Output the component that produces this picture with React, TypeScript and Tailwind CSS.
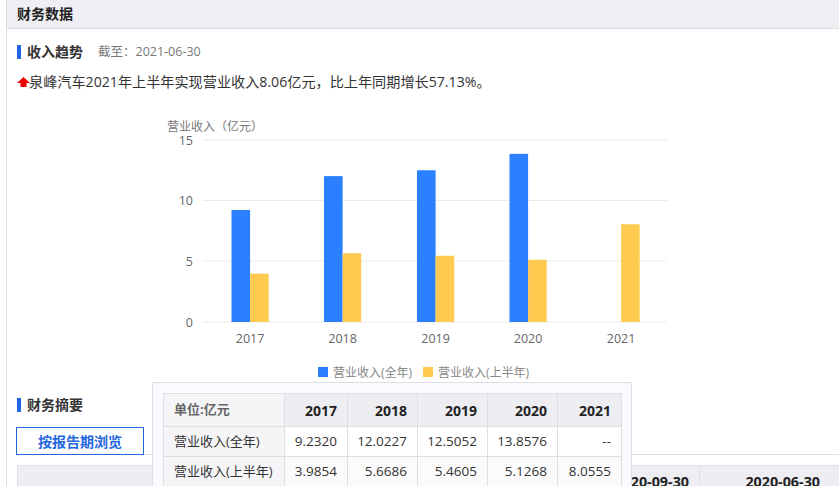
const FONT = '"Open Sans","Noto Sans CJK SC",sans-serif';

const years = ["2017", "2018", "2019", "2020", "2021"];
const blue = [9.232, 12.0227, 12.5052, 13.8576, 0];
const yellow = [3.9854, 5.6686, 5.4605, 5.1268, 8.0555];
const starts = [231.5, 324, 417, 509.5, 602.5];

function Chart() {
  const y0 = 322;
  const scale = 182 / 15;
  return (
    <svg width="530" height="275" viewBox="150 110 530 275" className="block">
      <g fontFamily={FONT} fontSize="12.5" fill="#666">
        <text x="167" y="131" fill="#777" fontSize="12">营业收入（亿元）</text>
        {[["15", 140], ["10", 200.5], ["5", 261], ["0", 322]].map(([l, y]) => (
          <g key={l as string}>
            <line x1="203" x2="667" y1={y as number} y2={y as number} stroke="#ebebeb" strokeWidth="1" />
            <text x="193" y={(y as number) + 4.5} textAnchor="end" fontSize="12.5">{l}</text>
          </g>
        ))}
        {years.map((yr, i) => (
          <g key={yr}>
            {blue[i] > 0 && (
              <rect x={starts[i]} width="18.6" y={y0 - blue[i] * scale} height={blue[i] * scale} fill="#2a80ff" />
            )}
            <rect x={starts[i] + 18.6} width="18.6" y={y0 - yellow[i] * scale} height={yellow[i] * scale} fill="#ffca50" />
            <text x={starts[i] + 18.6} y="343" textAnchor="middle" fontSize="12.5">{yr}</text>
          </g>
        ))}
        <rect x="318" y="367" width="10" height="10" fill="#2a80ff" />
        <text x="333" y="377" fontSize="12" fill="#888">营业收入(全年)</text>
        <rect x="423" y="367" width="10" height="10" fill="#ffca50" />
        <text x="438" y="377" fontSize="12" fill="#888">营业收入(上半年)</text>
      </g>
    </svg>
  );
}

function Heading({ children }: { children: React.ReactNode }) {
  return (
    <div className="flex items-center gap-[6px]">
      <span className="block w-[4px] h-[14px] bg-[#1f66e0]" />
      <span className="text-[14px] leading-[16px] font-bold text-[#333]">{children}</span>
    </div>
  );
}

const rows = [
  ["营业收入(全年)", "9.2320", "12.0227", "12.5052", "13.8576", "--"],
  ["营业收入(上半年)", "3.9854", "5.6686", "5.4605", "5.1268", "8.0555"],
];

function Tooltip() {
  return (
    <div className="absolute left-[152px] top-[382px] w-[480px] h-[120px] bg-[#fafbff] border border-[#dfdfe3] pt-[10px] pl-[10px]">
      <table className="border-collapse text-[13px] text-[#333] table-fixed w-[458px]">
        <colgroup>
          <col className="w-[121px]" />
          <col className="w-[63px]" />
          <col className="w-[70px]" />
          <col className="w-[70px]" />
          <col className="w-[70px]" />
          <col className="w-[64px]" />
        </colgroup>
        <thead>
          <tr className="h-[33px]">
            <th className="border border-[#dfdfe3] bg-[#f5f5f8] text-left pl-[10px] font-bold text-[#666]">单位:亿元</th>
            {years.map((y) => (
              <th key={y} className="border border-[#dfdfe3] bg-[#eeeef2] text-right pr-[10px] text-[14px] font-bold text-[#222]">{y}</th>
            ))}
          </tr>
        </thead>
        <tbody>
          {rows.map((r, i) => (
            <tr key={r[0]} className="h-[30px]">
              <td className="border border-[#dfdfe3] bg-[#f5f5f8] pl-[10px]">{r[0]}</td>
              {r.slice(1).map((c, j) => (
                <td key={j} className={`border border-[#dfdfe3] text-right pr-[10px] text-[13.5px] ${i === 0 ? "bg-white" : "bg-[#fbfbfb]"}`}>{c}</td>
              ))}
            </tr>
          ))}
        </tbody>
      </table>
    </div>
  );
}

export default function App() {
  return (
    <div className="relative w-[839px] h-[486px] overflow-hidden bg-white pl-[6px]" style={{ fontFamily: FONT }}>
      <div className="border-l border-[#dcdfe6] h-[486px]">
        <div className="h-[29px] bg-[#eeeef3] border-b border-[#dcdce2] flex items-center pl-[10px] pb-[2px] text-[14px] font-bold text-[#222]">
          财务数据
        </div>
        <div className="pl-[10px]">
          <div className="flex items-center mt-[15px] h-[16px]">
            <Heading>收入趋势</Heading>
            <span className="ml-[15px] text-[12.5px] text-[#777]">截至：2021-06-30</span>
          </div>
          <div className="flex items-center mt-[12px] h-[20px] text-[14.15px] text-[#333]">
            <svg width="13" height="12" viewBox="0 0 13 12" className="shrink-0">
              <path d="M6.5 1 L13 7 H9.5 V11 H3.5 V7 H0 Z" fill="#f00000" />
            </svg>
            <span className="-ml-px">泉峰汽车2021年上半年实现营业收入8.06亿元，比上年同期增长57.13%。</span>
          </div>
          <div className="ml-[133px] mt-[18px]">
            <Chart />
          </div>
          <div className="mt-[12px]">
            <Heading>财务摘要</Heading>
          </div>
          <div className="mt-[14px] h-[28px] border-b border-[#dfdfe3] w-[830px]">
            <div className="-ml-px w-[128px] h-[28px] bg-white border border-[#1f66e0] flex items-center justify-center text-[14px] font-bold text-[#1f66e0]">
              按报告期浏览
            </div>
          </div>
          <div className="mt-[10px] flex h-[40px] w-[823px] bg-[#eeeef2] border border-[#dfdfe3] text-[14.3px] font-bold text-[#222]">
            <div className="flex-1 border-r border-[#dfdfe3] flex justify-end pr-[10px] pt-[5px]">2020-09-30</div>
            <div className="w-[139px] flex justify-end pr-[19px] pt-[5px]">2020-06-30</div>
          </div>
        </div>
      </div>
      <Tooltip />
    </div>
  );
}
